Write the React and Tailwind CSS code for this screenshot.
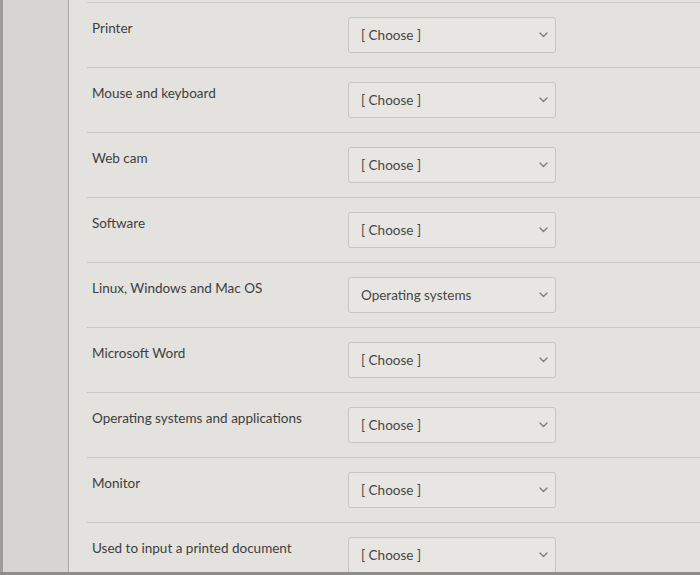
import React from "react";

const rows = [
  ["Printer", "[ Choose ]"],
  ["Mouse and keyboard", "[ Choose ]"],
  ["Web cam", "[ Choose ]"],
  ["Software", "[ Choose ]"],
  ["Linux, Windows and Mac OS", "Operating systems"],
  ["Microsoft Word", "[ Choose ]"],
  ["Operating systems and applications", "[ Choose ]"],
  ["Monitor", "[ Choose ]"],
  ["Used to input a printed document", "[ Choose ]"],
];

function Chevron() {
  return (
    <svg width="9" height="6" viewBox="0 0 9 6" fill="none">
      <path d="M1 1l3.5 3.5L8 1" stroke="#7a7a7a" strokeWidth="1.3" strokeLinecap="round" strokeLinejoin="round" />
    </svg>
  );
}

export default function App() {
  return (
    <div
      className="flex flex-col w-[700px] h-[575px] overflow-hidden bg-[#e3e2df]"
      style={{ fontFamily: "Lato, 'Open Sans', sans-serif" }}
    >
      <div className="flex flex-1 min-h-0">
        <div className="w-[69px] h-full bg-[#d6d5d2] border-l-[3px] border-l-[#9d9c99] border-r border-r-[#a9a8a5] shrink-0" />
        <div className="flex-1 flex flex-col pt-[2px]">
          <div className="ml-[18px] border-t border-[#cfcecb]" />
          {rows.map(([label, value], i) => (
            <div key={i} className="ml-[18px] h-[65px] border-b border-[#c9c8c5] flex shrink-0">
              <div className="w-[261px] pl-[5px] pt-[15px] text-[13.5px] text-[#3e3e3e]">
                {label}
              </div>
              <div className="pt-[14px]">
                <div className="w-[208px] h-[36px] border border-[#c6c5c2] rounded-[3px] bg-[#e7e6e3] flex items-center justify-between pl-[12px] pr-[7px] text-[13.5px] text-[#474747]">
                  <span>{value}</span>
                  <Chevron />
                </div>
              </div>
            </div>
          ))}
          <div className="flex-1" />
        </div>
      </div>
      <div className="h-[3px] bg-[#8e8d8a] shrink-0" />
    </div>
  );
}
